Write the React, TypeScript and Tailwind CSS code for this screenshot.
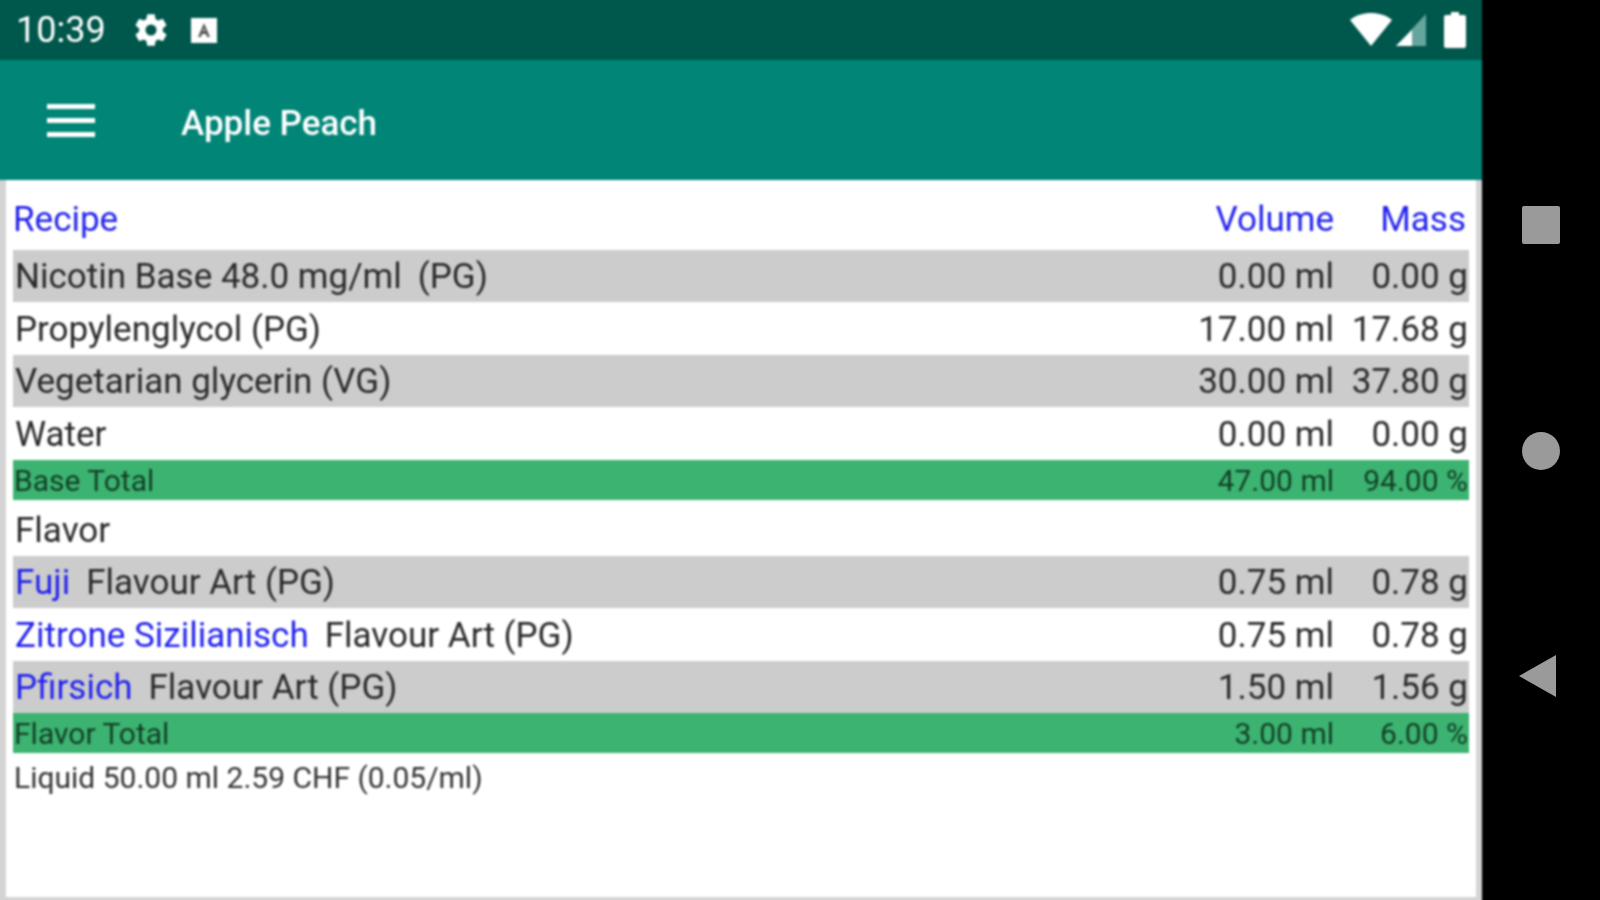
type Tone = "plain" | "gray" | "green";

interface Row {
  name: string;
  link?: string;
  lead?: string;
  volume?: string;
  mass?: string;
  tone: Tone;
  tall?: boolean;
}

const ROWS: Row[] = [
  { lead: "Nicotin Base 48.0 mg/ml", name: "(PG)", volume: "0.00 ml", mass: "0.00 g", tone: "gray" },
  { name: "Propylenglycol (PG)", volume: "17.00 ml", mass: "17.68 g", tone: "plain" },
  { name: "Vegetarian glycerin (VG)", volume: "30.00 ml", mass: "37.80 g", tone: "gray" },
  { name: "Water", volume: "0.00 ml", mass: "0.00 g", tone: "plain" },
  { name: "Base Total", volume: "47.00 ml", mass: "94.00 %", tone: "green" },
  { name: "Flavor", tone: "plain", tall: true },
  { link: "Fuji", name: "Flavour Art (PG)", volume: "0.75 ml", mass: "0.78 g", tone: "gray" },
  { link: "Zitrone Sizilianisch", name: "Flavour Art (PG)", volume: "0.75 ml", mass: "0.78 g", tone: "plain" },
  { link: "Pfirsich", name: "Flavour Art (PG)", volume: "1.50 ml", mass: "1.56 g", tone: "gray" },
  { name: "Flavor Total", volume: "3.00 ml", mass: "6.00 %", tone: "green" },
];

function RecipeRow({ row }: { row: Row }) {
  if (row.tone === "green") {
    return (
      <div className="flex h-[40px] items-center bg-[#3cb371] pl-[1px] text-[30px] text-[#123f26]">
        <span className="flex-1">{row.name}</span>
        <span className="w-[200px] text-right">{row.volume}</span>
        <span className="w-[135px] pr-[1px] text-right">{row.mass}</span>
      </div>
    );
  }

  let rowClass = "flex h-[53px] items-center pl-[2px] pt-[3px] text-[35px] text-[#2a2a2a]";
  if (row.tone === "gray") {
    rowClass = "flex h-[52px] items-center bg-[#cccccc] pl-[2px] pt-[3px] text-[35px] text-[#2a2a2a]";
  } else if (row.tall) {
    rowClass = "flex h-[56px] items-center pl-[2px] pt-[6px] text-[35px] text-[#2a2a2a]";
  }

  return (
    <div className={rowClass}>
      <span className="flex-1 whitespace-pre">
        {row.link && <span className="mr-[16px] text-[#2222ee]">{row.link}</span>}
        {row.lead && <span className="mr-[16px]">{row.lead}</span>}
        {row.name}
      </span>
      <span className="w-[200px] text-right">{row.volume}</span>
      <span className="w-[135px] pr-[1px] text-right">{row.mass}</span>
    </div>
  );
}

export default function App() {
  return (
    <div className="flex h-[900px] w-[1600px] overflow-hidden bg-black font-['Roboto',sans-serif]">
      {/* runs 4px past the window so the blur doesn't fade the edges to black */}
      <div className="-my-[4px] -ml-[4px] flex h-[908px] w-[1486px] shrink-0 flex-col blur-[0.8px]">
        <div className="flex h-[64px] items-center bg-[#00574b] pl-[20px] pr-[16px] pt-[4px] text-white">
          <span className="text-[36px]">10:39</span>
          <svg viewBox="0 0 24 24" className="ml-[26px] h-[38px] w-[38px]" fill="white">
            <path d="M19.4 13c.04-.3.1-.65.1-1s-.06-.7-.1-1l2.1-1.65c.2-.15.25-.42.12-.64l-2-3.46c-.12-.22-.4-.3-.6-.22l-2.5 1c-.52-.4-1.08-.73-1.7-.98l-.37-2.65A.5.5 0 0 0 14 2h-4a.5.5 0 0 0-.5.42l-.37 2.65c-.62.25-1.18.59-1.7.98l-2.5-1c-.22-.08-.48 0-.6.22l-2 3.46c-.13.22-.07.49.12.64L4.55 11c-.04.32-.05.66-.05 1s.01.68.05 1l-2.1 1.65c-.2.15-.25.42-.12.64l2 3.46c.12.22.38.3.6.22l2.5-1c.52.4 1.08.73 1.7.98l.37 2.65c.04.24.25.42.5.42h4c.25 0 .46-.18.5-.42l.37-2.65c.62-.25 1.18-.58 1.7-.98l2.5 1c.22.08.48 0 .6-.22l2-3.46c.12-.22.07-.49-.12-.64L19.4 13zM12 15.5a3.5 3.5 0 1 1 0-7 3.5 3.5 0 0 1 0 7z" />
          </svg>
          <svg viewBox="0 0 26 26" className="ml-[21px] h-[26px] w-[26px]">
            <path d="M0 1h26v25H0z" fill="white" />
            <path d="M13 6l6 14h-3l-1-3h-4l-1 3H7z" fill="#555" />
            <path d="M13 11l-1 3h2z" fill="white" />
          </svg>
          <div className="flex-1" />
          <svg viewBox="0 0 42 34" className="h-[34px] w-[42px]" fill="white">
            <path d="M0 7C6 2 13 0 21 0s15 2 21 7L21 33z" />
          </svg>
          <svg viewBox="0 0 30 32" className="ml-[4px] h-[32px] w-[30px]">
            <path d="M30 0v32H0z" fill="#66a59d" />
            <path d="M16 16v16H0z" fill="white" />
          </svg>
          <svg viewBox="0 0 22 36" className="ml-[18px] h-[36px] w-[22px]" fill="white">
            <path d="M7 0h8v3h5a2 2 0 0 1 2 2v29a2 2 0 0 1-2 2H2a2 2 0 0 1-2-2V5a2 2 0 0 1 2-2h5z" />
          </svg>
        </div>

        <div className="flex h-[120px] items-center bg-[#008577] text-white">
          <div className="ml-[51px] flex w-[48px] flex-col gap-[9px]">
            <div className="h-[5px] bg-white" />
            <div className="h-[5px] bg-white" />
            <div className="h-[5px] bg-white" />
          </div>
          <span className="ml-[86px] pt-[8px] text-[35px] font-medium">Apple Peach</span>
        </div>

        <div className="flex flex-1 flex-col border-b-[7px] border-l-[10px] border-r-[6px] border-b-[#d4d4d4] border-l-[#d4d4d4] border-r-[#d4d4d4] bg-white px-[7px] pt-[4px]">
          <div className="flex h-[66px] items-center pt-[7px] text-[35px] text-[#2222ee]">
            <span className="flex-1">Recipe</span>
            <span className="w-[200px] text-right">Volume</span>
            <span className="w-[135px] pr-[3px] text-right">Mass</span>
          </div>
          {ROWS.map((row) => (
            <RecipeRow key={row.tone + row.name + (row.link ?? "") + (row.lead ?? "")} row={row} />
          ))}
          <div className="mt-[2px] pl-[1px] text-[30px] text-[#333333]">Liquid 50.00 ml 2.59 CHF (0.05/ml)</div>
        </div>
      </div>

      <div className="flex flex-1 flex-col items-center pt-[206px] pr-[1px] blur-[0.5px]">
        <div className="h-[38px] w-[38px] rounded-[2px] bg-[#9a9a9a]" />
        <div className="mt-[188px] h-[38px] w-[38px] rounded-full bg-[#9a9a9a]" />
        <svg viewBox="0 0 38 42" className="mt-[185px] mr-[5px] h-[42px] w-[38px]" fill="#9a9a9a">
          <path d="M37 0v42L0 21z" />
        </svg>
      </div>
    </div>
  );
}
